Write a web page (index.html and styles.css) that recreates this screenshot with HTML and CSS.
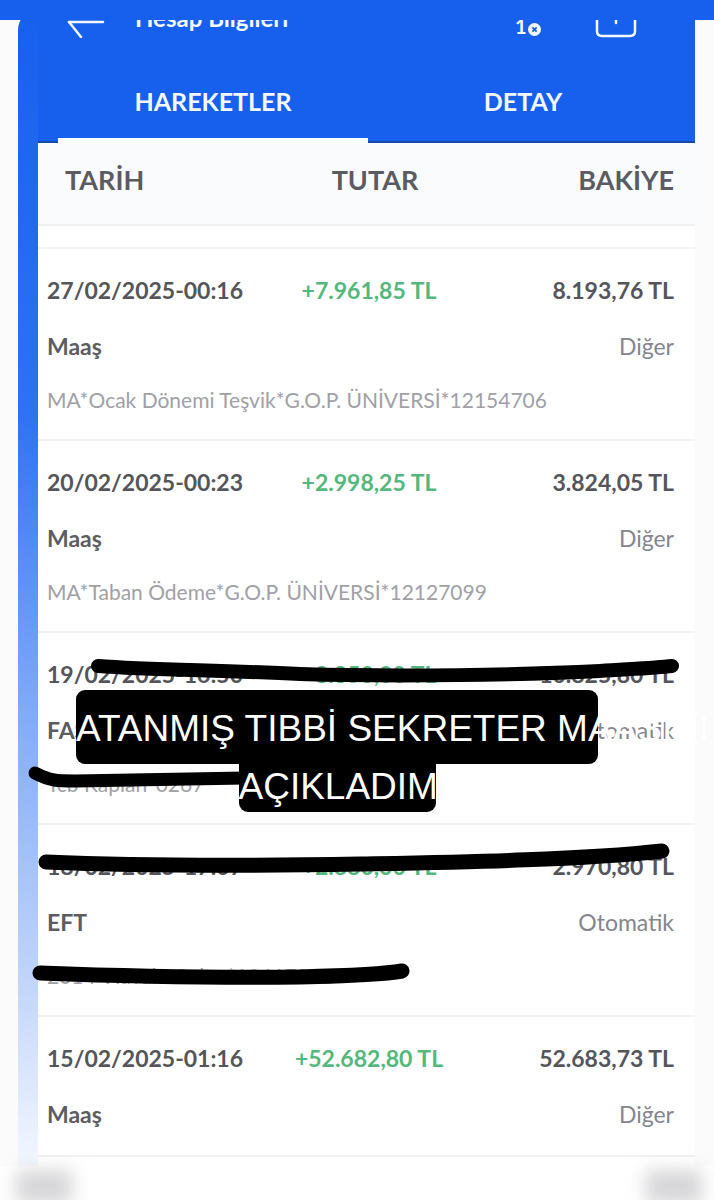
FILE: index.html
```html
<!DOCTYPE html>
<html lang="tr">
<head>
    <meta charset="UTF-8">
    <meta name="viewport" content="width=device-width, initial-scale=1.0">
    <title>Hesap Bilgileri</title>
    <link rel="stylesheet" href="styles.css">
</head>
<body>
    <div class="page">
        <div class="status-bar"></div>

        <div class="phone">
            <div class="side-strip"></div>
            <main class="app">
                <header class="app-header">
                    <div class="nav">
                        <svg class="nav-back" viewBox="0 0 38 18" fill="none" stroke="#f4f8ff" stroke-width="2.5" stroke-linecap="round">
                            <path d="M2 2 H36"/>
                            <path d="M2 2 L14 17"/>
                        </svg>
                        <span class="nav-title">Hesap Bilgileri</span>
                        <span class="nav-count">1<svg class="nav-badge" viewBox="0 0 12 12"><circle cx="6" cy="6" r="6" fill="#f4f8ff"/><path d="M4 4 L8 8 M8 4 L4 8" stroke="#1760ee" stroke-width="1.6"/></svg></span>
                        <svg class="nav-box" viewBox="0 0 42 18" fill="none" stroke="#f4f8ff" stroke-width="2.5" stroke-linecap="round">
                            <path d="M2 0 V11 Q2 16 7 16 H35 Q40 16 40 11 V0"/>
                            <path d="M21 0 V3"/>
                        </svg>
                    </div>
                    <div class="tabs">
                        <div class="tab active">HAREKETLER</div>
                        <div class="tab">DETAY</div>
                    </div>
                </header>

                <div class="table-head">
                    <span>TARİH</span>
                    <span class="center">TUTAR</span>
                    <span class="right">BAKİYE</span>
                </div>

                <section class="rows">
                    <article class="row">
                        <div class="cells">
                            <span class="date">27/02/2025-00:16</span>
                            <span class="amount">+7.961,85 TL</span>
                            <span class="balance">8.193,76 TL</span>
                        </div>
                        <div class="meta"><span class="type">Maaş</span><span class="channel">Diğer</span></div>
                        <p class="desc">MA*Ocak Dönemi Teşvik*G.O.P. ÜNİVERSİ*12154706</p>
                    </article>
                    <article class="row">
                        <div class="cells">
                            <span class="date">20/02/2025-00:23</span>
                            <span class="amount">+2.998,25 TL</span>
                            <span class="balance">3.824,05 TL</span>
                        </div>
                        <div class="meta"><span class="type">Maaş</span><span class="channel">Diğer</span></div>
                        <p class="desc">MA*Taban Ödeme*G.O.P. ÜNİVERSİ*12127099</p>
                    </article>
                    <article class="row">
                        <div class="cells">
                            <span class="date">19/02/2025-16:50</span>
                            <span class="amount">+8.850,00 TL</span>
                            <span class="balance">10.825,80 TL</span>
                        </div>
                        <div class="meta"><span class="type">FAST</span><span class="channel">Otomatik</span></div>
                        <p class="desc">Tcb Kaplan*0267</p>
                    </article>
                    <article class="row">
                        <div class="cells">
                            <span class="date">18/02/2025-17:07</span>
                            <span class="amount">+2.880,00 TL</span>
                            <span class="balance">2.970,80 TL</span>
                        </div>
                        <div class="meta"><span class="type">EFT</span><span class="channel">Otomatik</span></div>
                        <p class="desc">2014*Havale Gelen*10617901</p>
                    </article>
                    <article class="row last">
                        <div class="cells">
                            <span class="date">15/02/2025-01:16</span>
                            <span class="amount">+52.682,80 TL</span>
                            <span class="balance">52.683,73 TL</span>
                        </div>
                        <div class="meta"><span class="type">Maaş</span><span class="channel">Diğer</span></div>
                    </article>
                </section>
            </main>
        </div>

        <div class="footer-fade"></div>

        <!-- marker strokes over the private rows -->
        <svg class="scribbles" viewBox="0 0 714 1200" fill="none" stroke="#000" stroke-linecap="round" stroke-linejoin="round">
            <path stroke-width="14" d="M98 666 C150 670 220 670 300 674 C400 677 520 675 600 671 C630 669 655 668 672 666"/>
            <path stroke-width="13" d="M35 773 C50 781 58 781 75 781 L245 778"/>
            <path stroke-width="15" d="M46 862 C140 866 250 866 360 864 C460 862 580 860 662 851"/>
            <path stroke-width="15" d="M40 973 C120 976 220 978 300 977 C340 976 380 975 402 971"/>
        </svg>

        <!-- story caption -->
        <div class="caption">
            <span class="caption-line">ATANMIŞ TIBBİ SEKRETER MAAŞINI</span>
            <span class="caption-line short">AÇIKLADIM.</span>
        </div>
    </div>
</body>
</html>
```

FILE: styles.css
```css
* {
    box-sizing: border-box;
}
body {
    margin: 0;
    background-color: #fbfbfb;
    font-family: "Lato", "Noto Sans", sans-serif;
}
.page {
    position: relative;
    width: 714px;
    height: 1200px;
    overflow: hidden;
}
.status-bar {
    position: relative;
    z-index: 2;
    height: 20px;
    background: #1760ee;
}

/* phone frame */
.phone {
    display: flex;
    margin-left: 18px;
    width: 677px;
    height: 1146px;
}
.side-strip {
    width: 20px;
    margin-top: -10px;
    border-radius: 26px 0 0 0;
    background: linear-gradient(to bottom, #1760ee 0%, #2f72f2 35%, #7fa9f8 60%, #c4d7fb 85%, #f4f7fe 100%);
}
.app {
    flex: 1;
    background: #fff;
}
.app-header {
    height: 123px;
    background: #1760ee;
    color: #f4f8ff;
    border-bottom: 2px solid #164aa8;
}
.nav {
    display: flex;
    align-items: flex-start;
    height: 40px;
    overflow: hidden;
}
.nav-back {
    flex: none;
    width: 38px;
    height: 18px;
    margin-left: 29px;
}
.nav-title {
    margin: -17px 0 0 30px;
    width: 380px;
    font-size: 24px;
    line-height: 30px;
    font-weight: 700;
}
.nav-count {
    display: flex;
    align-items: center;
    width: 80px;
    margin-top: -6px;
    font-size: 20px;
    line-height: 24px;
    font-weight: 700;
}
.nav-badge {
    width: 13px;
    height: 13px;
    margin: 6px 0 0 1px;
}
.nav-box {
    flex: none;
    width: 42px;
    height: 18px;
}
.tabs {
    display: grid;
    grid-template-columns: 310px 310px;
    height: 83px;
    padding: 0 0 0 20px;
    font-size: 25px;
    font-weight: 700;
    text-align: center;
}
.tab {
    padding-top: 26px;
    line-height: 30px;
}
.tab.active {
    position: relative;
}
.tab.active::after {
    content: "";
    position: absolute;
    left: 0;
    right: 0;
    bottom: -2px;
    height: 7px;
    background: #fbfcfd;
}

/* table */
.table-head {
    display: grid;
    grid-template-columns: 234px 152px 1fr;
    align-items: center;
    height: 83px;
    padding: 0 21px 8px 27px;
    background: #fafbfc;
    border-bottom: 2px solid #f0f1f3;
    font-size: 27px;
    font-weight: 700;
    color: #5b5b62;
}
.center {
    text-align: center;
}
.right {
    text-align: right;
}
.rows {
    border-top: 2px solid #f2f3f4;
    margin-top: 21px;
}
.row {
    height: 192px;
    padding: 27px 21px 0 9px;
    border-bottom: 2px solid #f0f1f3;
}
.row.last {
    height: 140px;
}
.cells {
    display: grid;
    grid-template-columns: 246px 152px 1fr;
    font-size: 23px;
    line-height: 28px;
}
.date {
    font-weight: 700;
    color: #55555c;
}
.amount {
    text-align: center;
    font-weight: 700;
    color: #54b87c;
}
.balance {
    text-align: right;
    font-weight: 700;
    color: #55555c;
}
.meta {
    display: flex;
    justify-content: space-between;
    margin-top: 28px;
    font-size: 23px;
    line-height: 28px;
}
.type {
    font-weight: 700;
    color: #5c5c63;
}
.channel {
    color: #85858c;
}
.desc {
    margin: 26px 0 0;
    font-size: 21px;
    line-height: 28px;
    color: #a0a0a6;
}

/* bottom edge */
.footer-fade {
    position: absolute;
    left: 0;
    right: 0;
    bottom: 0;
    height: 34px;
    background: #fff;
}
.footer-fade::before,
.footer-fade::after {
    content: "";
    position: absolute;
    top: 4px;
    width: 56px;
    height: 34px;
    background: #d6d6d8;
    filter: blur(9px);
}
.footer-fade::before {
    left: 16px;
}
.footer-fade::after {
    right: 12px;
}

/* overlays */
.scribbles {
    position: absolute;
    left: 0;
    top: 0;
    width: 714px;
    height: 1200px;
}
.caption {
    position: absolute;
    left: 76px;
    top: 690px;
    width: 522px;
    display: flex;
    flex-direction: column;
    align-items: center;
    font-family: "Liberation Sans Narrow", "Liberation Sans", sans-serif;
    color: #fff;
    text-align: center;
}
.caption-line {
    display: block;
    width: 100%;
    height: 74px;
    padding-top: 16px;
    background: #000;
    border-radius: 9px;
    font-size: 37px;
    line-height: 46px;
    white-space: nowrap;
}
.caption-line.short {
    width: 197px;
    height: 48px;
    padding-top: 0;
    margin-top: 0;
    border-radius: 0 0 9px 9px;
}
```
